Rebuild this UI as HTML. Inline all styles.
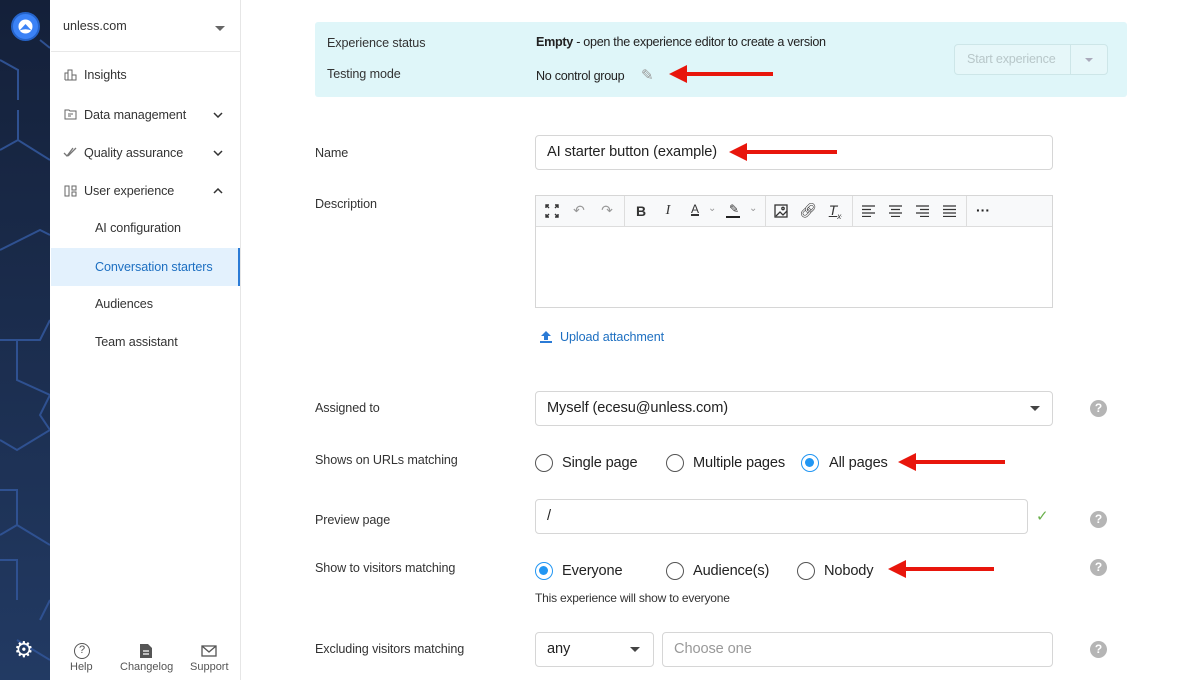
<!DOCTYPE html>
<html><head><meta charset="utf-8"><style>
*{box-sizing:border-box;margin:0;padding:0}
body{width:1200px;height:680px;overflow:hidden;font-family:"Liberation Sans",sans-serif;color:#222;background:#fff;position:relative;font-size:13px}
.a{position:absolute}
.rail{left:0;top:0;width:50px;height:680px;background:linear-gradient(#142039,#223a63)}
.side{left:51px;top:0;width:190px;height:680px;border-right:1px solid #e6e6e6;background:#fff}
.nav{left:0;width:189px;height:38px;line-height:38px;font-size:12.6px;color:#333;letter-spacing:-0.1px}
.lbl{font-size:12.6px;color:#333;letter-spacing:-0.1px}
.inp{border:1px solid #d6d6d6;border-radius:4px;background:#fff;font-size:14.6px;color:#222;padding-left:11px;letter-spacing:-0.1px}
.rad{width:18px;height:18px;border:1.5px solid #555;border-radius:50%}
.rad.on{border-color:#2196f3}
.rad.on:after{content:"";position:absolute;left:3px;top:3px;width:9px;height:9px;border-radius:50%;background:#2196f3}
.rt{font-size:14.6px;color:#222;letter-spacing:-0.15px}
.q{width:17px;height:17px;border-radius:50%;background:#b5b5b5;color:#fff;font-weight:bold;font-size:12px;text-align:center;line-height:17px}
.tb{color:#333;font-size:14px;text-align:center;width:20px}
</style></head><body>
<div class="a rail">
<svg width="50" height="680" style="position:absolute;left:0;top:0" fill="none" stroke="#2f5191" stroke-width="2">
<path d="M0 60 L18 70 L18 100 M40 40 L50 48 M0 150 L18 140 L50 160 M18 140 L18 110 M0 250 L40 230 L50 235 M0 340 L40 340 L50 320 M17 340 L17 380 L50 395 L40 415 L50 430 L17 450 L0 440 M0 490 L17 490 L17 525 L0 535 M17 525 L50 545 M0 560 L17 560 L17 600 M40 620 L50 600 M17 640 L50 660"/>
</svg>
<div class="a" style="left:11px;top:12px;width:29px;height:29px;border-radius:50%;background:#3b82f6;border:2px solid #2563c9"></div>
<svg class="a" style="left:16px;top:17px" width="19" height="19" viewBox="0 0 19 19"><circle cx="9.5" cy="9.5" r="7" fill="#fff"/><path d="M3.5 13.5 L9.5 7 L15.5 13.5 Q9.5 11 3.5 13.5Z" fill="#3b82f6"/></svg>
<div class="a" style="left:14px;top:638px;color:#fff;font-size:22px;line-height:24px">⚙</div>
</div>
<div class="a side">
<div class="a" style="left:12px;top:19px;font-size:12.6px;color:#333">unless.com</div>
<div class="a" style="left:164px;top:26px;border-left:5px solid transparent;border-right:5px solid transparent;border-top:5px solid #666"></div>
<div class="a" style="left:0;top:51px;width:189px;height:1px;background:#e8e8e8"></div>
<div class="a nav" style="top:56px;padding-left:33px">Insights</div>
<svg class="a" style="left:13px;top:69px" width="13" height="12" fill="none" stroke="#666"><path d="M1 11V4h3v7M4 11V1h4v10M8 11V6h4v5H1"/></svg>
<div class="a nav" style="top:96px;padding-left:33px">Data management</div>
<svg class="a" style="left:13px;top:109px" width="13" height="11" fill="none" stroke="#666"><path d="M1 1h4l1 1h6v8H1z M4 5h5M4 7h3"/></svg>
<div class="a nav" style="top:134px;padding-left:33px">Quality assurance</div>
<svg class="a" style="left:12px;top:147px" width="14" height="11" fill="none" stroke="#777" stroke-width="1.3"><path d="M1 6l3 3 6-8M5 9l8-8"/></svg>
<div class="a nav" style="top:172px;padding-left:33px">User experience</div>
<svg class="a" style="left:13px;top:185px" width="13" height="12" fill="none" stroke="#666"><rect x="1" y="1" width="4" height="10"/><rect x="8" y="1" width="4" height="4"/><rect x="8" y="7" width="4" height="4"/></svg>
<svg class="a" style="left:162px;top:112px" width="10" height="6" fill="none" stroke="#333" stroke-width="1.5"><path d="M1 1l4 4 4-4"/></svg>
<svg class="a" style="left:162px;top:150px" width="10" height="6" fill="none" stroke="#333" stroke-width="1.5"><path d="M1 1l4 4 4-4"/></svg>
<svg class="a" style="left:162px;top:188px" width="10" height="6" fill="none" stroke="#333" stroke-width="1.5"><path d="M1 5l4-4 4 4"/></svg>
<div class="a nav" style="top:209px;padding-left:44px">AI configuration</div>
<div class="a nav" style="top:248px;padding-left:44px;background:#e3f1fd;color:#1d6fc1;border-right:2px solid #2b7bd6">Conversation starters</div>
<div class="a nav" style="top:285px;padding-left:44px">Audiences</div>
<div class="a nav" style="top:323px;padding-left:44px">Team assistant</div>
<div class="a" style="left:23px;top:643px;width:16px;height:16px;border:1.5px solid #555;border-radius:50%;font-size:11px;text-align:center;line-height:13px;color:#555">?</div>
<div class="a" style="left:19px;top:661px;font-size:11px;color:#555">Help</div>
<svg class="a" style="left:88px;top:643px" width="14" height="16"><path d="M1 1h8l4 4v10H1z" fill="#555"/><path d="M4 8h6M4 11h6" stroke="#fff" stroke-width="1.3"/></svg>
<div class="a" style="left:69px;top:661px;font-size:11px;color:#555">Changelog</div>
<svg class="a" style="left:150px;top:645px" width="16" height="12" fill="none" stroke="#555" stroke-width="1.3"><rect x="1" y="1" width="14" height="10"/><path d="M1 1l7 6 7-6"/></svg>
<div class="a" style="left:139px;top:661px;font-size:11px;color:#555">Support</div>
</div>

<div class="a" style="left:315px;top:22px;width:812px;height:75px;background:#dff6f9;border-radius:3px"></div>
<div class="a lbl" style="left:327px;top:36px">Experience status</div>
<div class="a lbl" style="left:327px;top:67px">Testing mode</div>
<div class="a lbl" style="left:536px;top:35px;color:#222;letter-spacing:-0.3px"><b>Empty</b> - open the experience editor to create a version</div>
<div class="a lbl" style="left:536px;top:69px;color:#222;letter-spacing:-0.3px">No control group</div>
<div class="a" style="left:641px;top:66px;color:#999;font-size:15px">✎</div>
<div class="a" style="left:954px;top:44px;width:154px;height:31px;border:1px solid #cde6e8;border-radius:4px;background:#e6f7f9"></div>
<div class="a" style="left:1070px;top:44px;width:1px;height:31px;background:#cde6e8"></div>
<div class="a" style="left:967px;top:52px;font-size:12.6px;color:#b8c7c9;letter-spacing:-0.2px">Start experience</div>
<div class="a" style="left:1085px;top:58px;border-left:4px solid transparent;border-right:4px solid transparent;border-top:4px solid #aab"></div>

<div class="a lbl" style="left:315px;top:146px">Name</div>
<div class="a inp" style="left:535px;top:135px;width:518px;height:35px;line-height:33px">AI starter button (example)</div>
<div class="a lbl" style="left:315px;top:197px">Description</div>
<div class="a" style="left:535px;top:195px;width:518px;height:113px;border:1px solid #d6d6d6"></div>
<div class="a" style="left:536px;top:196px;width:516px;height:31px;background:#f8f9fa;border-bottom:1px solid #ddd"></div>
<div class="a" style="left:624px;top:196px;width:1px;height:31px;background:#ddd"></div>
<div class="a" style="left:765px;top:196px;width:1px;height:31px;background:#ddd"></div>
<div class="a" style="left:852px;top:196px;width:1px;height:31px;background:#ddd"></div>
<div class="a" style="left:966px;top:196px;width:1px;height:31px;background:#ddd"></div>
<svg class="a" style="left:545px;top:204px" width="14" height="14" fill="none" stroke="#333" stroke-width="1.4"><path d="M1 4V1h3M1 1l3 3M10 1h3v3M13 1l-3 3M1 10v3h3M1 13l3-3M13 10v3h-3M13 13l-3-3"/></svg>
<div class="a tb" style="left:569px;top:202px;color:#999">↶</div>
<div class="a tb" style="left:597px;top:202px;color:#999">↷</div>
<div class="a tb" style="left:631px;top:203px;font-weight:bold">B</div>
<div class="a tb" style="left:658px;top:203px;font-style:italic;font-family:'Liberation Serif',serif">I</div>
<div class="a tb" style="left:685px;top:202px;font-size:12px;text-decoration:underline;text-decoration-thickness:2px">A</div>
<div class="a" style="left:708px;top:203px;color:#999;font-size:10px">⌄</div>
<div class="a tb" style="left:724px;top:202px;font-size:12px">✎</div>
<div class="a" style="left:726px;top:216px;width:14px;height:2px;background:#222"></div>
<div class="a" style="left:749px;top:203px;color:#999;font-size:10px">⌄</div>
<svg class="a" style="left:774px;top:204px" width="14" height="14" fill="none" stroke="#333" stroke-width="1.3"><rect x="1" y="1" width="12" height="12"/><path d="M2 12l4-4 3 3 4-4"/><circle cx="9" cy="4.5" r="1.2"/></svg>
<div class="a tb" style="left:798px;top:202px">🔗︎</div>
<div class="a tb" style="left:825px;top:202px;font-style:italic;text-decoration:underline">T<sub style="font-size:8px">x</sub></div>
<svg class="a" style="left:862px;top:205px" width="110" height="12" stroke="#333" stroke-width="1.3"><path d="M0 1h13M0 4.5h9M0 8h13M0 11.5h9"/><path d="M27 1h13M29 4.5h9M27 8h13M29 11.5h9"/><path d="M54 1h13M58 4.5h9M54 8h13M58 11.5h9"/><path d="M81 1h13M81 4.5h13M81 8h13M81 11.5h13"/></svg>
<div class="a" style="left:976px;top:202px;font-weight:bold;font-size:14px">···</div>
<svg class="a" style="left:540px;top:331px" width="12" height="12" fill="#2b7bd6"><path d="M6 0L11 5H8v4H4V5H1z"/><rect x="0" y="10" width="12" height="2"/></svg>
<div class="a" style="left:560px;top:330px;color:#1d6fc1;font-size:12.6px;letter-spacing:-0.1px">Upload attachment</div>

<div class="a lbl" style="left:315px;top:401px">Assigned to</div>
<div class="a inp" style="left:535px;top:391px;width:518px;height:35px;line-height:33px">Myself (ecesu@unless.com)</div>
<div class="a" style="left:1030px;top:406px;border-left:5px solid transparent;border-right:5px solid transparent;border-top:5px solid #444"></div>
<div class="a q" style="left:1090px;top:400px">?</div>

<div class="a lbl" style="left:315px;top:453px">Shows on URLs matching</div>
<div class="a rad" style="left:535px;top:454px"></div><div class="a rt" style="left:562px;top:455px">Single page</div>
<div class="a rad" style="left:666px;top:454px"></div><div class="a rt" style="left:693px;top:455px">Multiple pages</div>
<div class="a rad on" style="left:801px;top:454px"></div><div class="a rt" style="left:829px;top:455px">All pages</div>

<div class="a lbl" style="left:315px;top:513px">Preview page</div>
<div class="a inp" style="left:535px;top:499px;width:493px;height:35px;line-height:33px">/</div>
<div class="a" style="left:1036px;top:507px;color:#6ab04c;font-size:15px">✓</div>
<div class="a q" style="left:1090px;top:511px">?</div>

<div class="a lbl" style="left:315px;top:561px">Show to visitors matching</div>
<div class="a rad on" style="left:535px;top:562px"></div><div class="a rt" style="left:562px;top:563px">Everyone</div>
<div class="a rad" style="left:666px;top:562px"></div><div class="a rt" style="left:693px;top:563px">Audience(s)</div>
<div class="a rad" style="left:797px;top:562px"></div><div class="a rt" style="left:824px;top:563px">Nobody</div>
<div class="a" style="left:535px;top:591px;font-size:12px;color:#333;letter-spacing:-0.2px">This experience will show to everyone</div>
<div class="a q" style="left:1090px;top:559px">?</div>

<div class="a lbl" style="left:315px;top:642px">Excluding visitors matching</div>
<div class="a inp" style="left:535px;top:632px;width:119px;height:35px;line-height:33px">any</div>
<div class="a" style="left:630px;top:647px;border-left:5px solid transparent;border-right:5px solid transparent;border-top:5px solid #444"></div>
<div class="a inp" style="left:662px;top:632px;width:391px;height:35px;line-height:33px;color:#999">Choose one</div>
<div class="a q" style="left:1090px;top:641px">?</div>

<svg class="a" style="left:0;top:0" width="1200" height="680">
<g fill="#e8160c">
<path d="M669 74l18-9v7h86v4h-86v7z"/>
<path d="M729 152l18-9v7h90v4h-90v7z"/>
<path d="M898 462l18-9v7h89v4h-89v7z"/>
<path d="M888 569l18-9v7h88v4h-88v7z"/>
</g></svg>
</body></html>
